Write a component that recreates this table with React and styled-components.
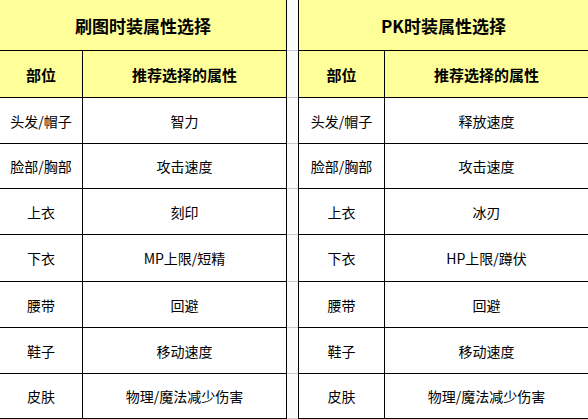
import React from "react";
import styled, { createGlobalStyle } from "styled-components";

const Global = createGlobalStyle`
  html, body { margin: 0; padding: 0; background: #ffffff; }
  body { font-family: "Noto Sans CJK SC", "Noto Sans", sans-serif; }
`;

const ROWS = "50px 46px 45px 44px 45px 46px 45px 45px 44px";

const Page = styled.div`
  display: flex;
  align-items: flex-start;
  width: 588px;
  height: 419px;
  overflow: hidden;
`;

const Sheet = styled.div`
  display: grid;
  grid-template-columns: ${(p) => p.$cols};
  grid-template-rows: ${ROWS};
  gap: 1px;
  background: #000;
  padding: ${(p) => (p.$side === "left" ? "0 1px 1px 0" : "0 0 1px 1px")};
  flex: none;
`;

const Gutter = styled.div`
  display: grid;
  grid-template-rows: ${ROWS};
  row-gap: 1px;
  background: #c9c9c9;
  padding-bottom: 1px;
  width: 11px;
  flex: none;
`;

const GutterCell = styled.div`
  background: #fbfbfb;
`;

const Cell = styled.div`
  display: flex;
  align-items: center;
  justify-content: center;
  background: ${(p) => (p.$head ? "#ffff99" : "#ffffff")};
  color: #000;
  font-size: ${(p) => (p.$title ? "17px" : p.$head ? "15px" : "14px")};
  font-weight: ${(p) => (p.$head ? 700 : 400)};
  grid-column: ${(p) => (p.$title ? "1 / span 2" : "auto")};
  white-space: nowrap;
  letter-spacing: 0;
`;

const pve = [
  ["头发/帽子", "智力"],
  ["脸部/胸部", "攻击速度"],
  ["上衣", "刻印"],
  ["下衣", "MP上限/短精"],
  ["腰带", "回避"],
  ["鞋子", "移动速度"],
  ["皮肤", "物理/魔法减少伤害"],
];

const pvp = [
  ["头发/帽子", "释放速度"],
  ["脸部/胸部", "攻击速度"],
  ["上衣", "冰刃"],
  ["下衣", "HP上限/蹲伏"],
  ["腰带", "回避"],
  ["鞋子", "移动速度"],
  ["皮肤", "物理/魔法减少伤害"],
];

function Table({ title, rows, cols, side }) {
  return (
    <Sheet $cols={cols} $side={side}>
      <Cell $head $title>{title}</Cell>
      <Cell $head>部位</Cell>
      <Cell $head>推荐选择的属性</Cell>
      {rows.map(([part, attr]) => (
        <React.Fragment key={part}>
          <Cell>{part}</Cell>
          <Cell>{attr}</Cell>
        </React.Fragment>
      ))}
    </Sheet>
  );
}

export default function App() {
  return (
    <>
      <Global />
      <Page>
        <Table title="刷图时装属性选择" rows={pve} cols="82px 203px" side="left" />
        <Gutter>
          {Array.from({ length: 9 }).map((_, i) => (
            <GutterCell key={i} />
          ))}
        </Gutter>
        <Table title="PK时装属性选择" rows={pvp} cols="85px 203px" side="right" />
      </Page>
    </>
  );
}
